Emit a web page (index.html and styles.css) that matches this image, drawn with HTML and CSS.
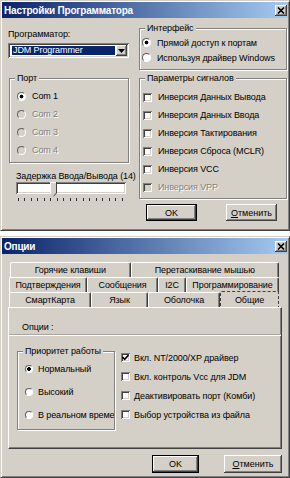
FILE: index.html
```html
<!DOCTYPE html>
<html lang="ru">
<head>
    <meta charset="UTF-8">
    <title>Настройки Программатора</title>
    <link rel="stylesheet" href="styles.css">
</head>
<body>
    <!-- Programmer settings dialog -->
    <div class="dlg dlg-prog">
        <div class="titlebar">
            <span>Настройки Программатора</span>
            <span class="close"><svg width="8" height="7" viewBox="0 0 8 7"><path d="M1 0.5 L7 6.5 M7 0.5 L1 6.5" stroke="#000" stroke-width="1.6"/></svg></span>
        </div>
        <div class="prog-body">
            <div class="col-left">
                <div class="label">Программатор:</div>
                <div class="combo">
                    <span class="combo-sel">JDM Programmer</span>
                    <span class="combo-btn"><svg width="7" height="4" viewBox="0 0 7 4"><path d="M0 0 H7 L3.5 4 Z" fill="#000"/></svg></span>
                </div>
                <fieldset class="group group-port">
                    <legend>Порт</legend>
                    <div class="group-in">
                        <div class="radio on"><i></i>Com 1</div>
                        <div class="radio off"><i></i>Com 2</div>
                        <div class="radio off"><i></i>Com 3</div>
                        <div class="radio off"><i></i>Com 4</div>
                    </div>
                </fieldset>
                <div class="label delay">Задержка Ввода/Вывода (14)</div>
                <div class="slider">
                    <div class="track"></div>
                    <svg class="thumb" width="7" height="15" viewBox="0 0 7 15">
                        <path d="M0 0 H7 V11 L3.5 15 L0 11 Z" fill="#d4d0c8"/>
                        <path d="M6.5 0 V11 L3.5 14.3" stroke="#404040" fill="none"/>
                        <path d="M0.5 11 V0.5 H6" stroke="#fff" fill="none"/>
                    </svg>
                </div>
                <div class="ticks"></div>
            </div>
            <div class="col-right">
                <fieldset class="group group-iface">
                    <legend>Интерфейс</legend>
                    <div class="group-in">
                        <div class="radio on"><i></i>Прямой доступ к портам</div>
                        <div class="radio"><i></i>Используя драйвер Windows</div>
                    </div>
                </fieldset>
                <fieldset class="group group-sig">
                    <legend>Параметры сигналов</legend>
                    <div class="group-in">
                        <div class="check"><i></i>Инверсия Данных Вывода</div>
                        <div class="check"><i></i>Инверсия Данных Ввода</div>
                        <div class="check"><i></i>Инверсия Тактирования</div>
                        <div class="check"><i></i>Инверсия Сброса (MCLR)</div>
                        <div class="check"><i></i>Инверсия VCC</div>
                        <div class="check off"><i></i>Инверсия VPP</div>
                    </div>
                </fieldset>
                <div class="buttons buttons-prog">
                    <button class="btn default">OK</button>
                    <button class="btn"><u>О</u>тменить</button>
                </div>
            </div>
        </div>
    </div>

    <!-- Options dialog -->
    <div class="dlg dlg-opt">
        <div class="titlebar">
            <span>Опции</span>
            <span class="close"><svg width="8" height="7" viewBox="0 0 8 7"><path d="M1 0.5 L7 6.5 M7 0.5 L1 6.5" stroke="#000" stroke-width="1.6"/></svg></span>
        </div>
        <div class="tabs">
            <div class="tab-row row1">
                <span class="tab" style="width:121px">Горячие клавиши</span>
                <span class="tab" style="width:149px">Перетаскивание мышью</span>
            </div>
            <div class="tab-row">
                <span class="tab" style="width:78px">Подтверждения</span>
                <span class="tab" style="width:71px">Сообщения</span>
                <span class="tab" style="width:28px">I2C</span>
                <span class="tab" style="width:93px">Программирование</span>
            </div>
            <div class="tab-row">
                <span class="tab" style="width:82px">СмартКарта</span>
                <span class="tab" style="width:57px">Язык</span>
                <span class="tab" style="width:72px">Оболочка</span>
                <span class="tab sel" style="width:59px">Общие</span>
            </div>
        </div>
        <div class="panel">
            <div class="panel-title">Опции :</div>
            <div class="separator"></div>
            <div class="panel-row">
                <fieldset class="group group-prio">
                    <legend>Приоритет работы</legend>
                    <div class="group-in">
                        <div class="radio on"><i></i>Нормальный</div>
                        <div class="radio"><i></i>Высокий</div>
                        <div class="radio"><i></i>В реальном времени</div>
                    </div>
                </fieldset>
                <div class="opt-checks">
                    <div class="check on"><i><svg width="7" height="7" viewBox="0 0 7 7"><path d="M0.5 3 L2.7 5.3 L6.5 1" stroke="#000" stroke-width="1.6" fill="none"/></svg></i>Вкл. NT/2000/XP драйвер</div>
                    <div class="check"><i></i>Вкл. контроль Vcc для JDM</div>
                    <div class="check"><i></i>Деактивировать порт (Комби)</div>
                    <div class="check"><i></i>Выбор устройства из файла</div>
                </div>
            </div>
        </div>
        <div class="buttons buttons-opt">
            <button class="btn default btn-ok">OK</button>
            <button class="btn btn-cancel"><u>О</u>тменить</button>
        </div>
    </div>
</body>
</html>
```

FILE: styles.css
```css
/* General */
* { box-sizing: border-box; }
body { margin: 0; background: #fff; font-family: "Liberation Sans", Arial, sans-serif; font-size: 9px; letter-spacing: -0.1px; color: #000; }

/* Window frame */
.dlg { width: 290px; background: #d4d0c8; border: 1px solid; border-color: #d4d0c8 #404040 #404040 #d4d0c8; box-shadow: inset 1px 1px #fff, inset -1px -1px #808080; padding: 1px; }
.dlg-prog { height: 231px; }
.dlg-opt { height: 242px; margin-top: 5px; }

.titlebar { height: 16px; display: flex; align-items: center; justify-content: space-between; padding: 0 1px 0 2px; background: linear-gradient(90deg, #0a246a, #a6caf0); color: #fff; font-weight: bold; font-size: 10px; letter-spacing: -0.2px; }
.close { width: 12px; height: 11px; display: flex; align-items: center; justify-content: center; background: #d4d0c8; box-shadow: inset -1px -1px #404040, inset 1px 1px #fff, inset -2px -2px #808080; }

/* Common controls */
.label { line-height: 12px; white-space: nowrap; }
.group { margin: 0; padding: 0; min-width: 0; border: 1px solid #808080; box-shadow: 1px 1px 0 #fff, inset 1px 1px 0 #fff; }
.group legend { padding: 0 2px; margin-left: 5px; line-height: 12px; background: #d4d0c8; white-space: nowrap; }
.radio, .check { display: flex; align-items: center; white-space: nowrap; }
.radio i { width: 9px; height: 9px; flex: none; margin-right: 6px; border-radius: 50%; border: 1px solid; border-color: #606060 #fff #fff #606060; background: #fff; }
.radio.on i { background: radial-gradient(circle, #000 0 1.6px, #fff 2.2px); }
.radio.off, .check.off { color: #808080; text-shadow: 1px 1px 0 #fff; }
.radio.off i, .check.off i { background: #d4d0c8; }
.check i { width: 9px; height: 9px; flex: none; margin-right: 6px; display: flex; align-items: center; justify-content: center; background: #fff; box-shadow: inset 1px 1px #808080, inset -1px -1px #fff, inset 2px 2px #404040, inset -2px -2px #d4d0c8; }

.btn { height: 17px; width: 51px; padding: 0; border: none; font: inherit; color: #000; background: #d4d0c8; box-shadow: inset -1px -1px #404040, inset 1px 1px #fff, inset -2px -2px #808080, inset 2px 2px #d4d0c8; }
.btn.default { border: 1px solid #000; }
.btn u { text-decoration: underline; }

/* Programmer dialog */
.prog-body { display: flex; gap: 6px; padding-left: 6px; }
.col-left { width: 125px; }
.col-left > .label:first-child { margin-top: 10px; }
.combo { margin-top: 3px; width: 121px; height: 15px; display: flex; align-items: center; padding: 2px; background: #fff; box-shadow: inset 1px 1px #808080, inset -1px -1px #fff, inset 2px 2px #404040, inset -2px -2px #d4d0c8; }
.combo-sel { flex: 1; height: 9px; margin: 0 1px 0 2px; padding-left: 1px; line-height: 9px; background: #0a246a; color: #fff; }
.combo-btn { width: 11px; height: 11px; display: flex; align-items: center; justify-content: center; background: #d4d0c8; box-shadow: inset -1px -1px #404040, inset 1px 1px #fff, inset -2px -2px #808080; }

.group-port { margin: 14px 0 0 1px; width: 120px; }
.group-port .group-in { padding: 3px 0 3px 7px; }
.group-port .radio { height: 18px; }

.delay { margin-top: 7px; padding-left: 8px; }
.slider { position: relative; margin-left: 8px; width: 110px; height: 15px; }
.track { width: 110px; height: 12px; background: #fff; box-shadow: inset 1px 1px #808080, inset -1px -1px #fff, inset 2px 2px #404040, inset -2px -2px #d4d0c8; }
.thumb { position: absolute; left: 34px; top: 0; }
.ticks { margin: 1px 0 0 10px; width: 106px; height: 3px; background: repeating-linear-gradient(90deg, #303030 0 1px, transparent 1px 6.5px); }

.col-right { width: 148px; }
.group-iface { margin-top: 4px; }
.group-iface .group-in { padding: 1px 0 4px 2px; }
.group-iface .radio { height: 15px; }
.group-sig { margin-top: 2px; }
.group-sig .group-in { padding: 4px 0 2px 3px; }
.group-sig .check { height: 18px; }

.buttons { display: flex; }
.buttons-prog { margin-top: 5px; padding-left: 7px; gap: 29px; }

/* Options dialog */
.tabs { margin: 8px 0 0 7px; width: 270px; }
.tab-row { display: flex; height: 15px; }
.row1 { margin-left: 1px; }
.tab { height: 15px; display: flex; align-items: center; justify-content: center; white-space: nowrap; border-top: 1px solid #fff; border-left: 1px solid #fff; border-right: 1px solid #404040; border-radius: 2px 2px 0 0; box-shadow: inset -1px 0 #808080; }
.tab.sel { position: relative; z-index: 1; height: 16px; margin: -1px 0 -1px; background: #d4d0c8; border: 1px dashed #404040; border-bottom: none; box-shadow: none; }

.panel { width: 274px; height: 142px; margin-left: 6px; border: 1px solid; border-color: #fff #404040 #404040 #fff; box-shadow: inset -1px -1px #808080; }
.panel-title { margin-top: 13px; padding-left: 13px; line-height: 12px; }
.separator { margin-top: 1px; height: 2px; border-top: 1px solid #a8a5a0; border-bottom: 1px solid #fff; }
.panel-row { display: flex; margin-top: 9px; padding-left: 8px; gap: 6px; }
.group-prio { width: 98px; }
.group-prio .group-in { padding: 0 1px 3px 7px; overflow: hidden; }
.group-prio .radio { height: 23px; }
.group-prio .radio i { width: 8px; height: 8px; margin-right: 5px; }
.opt-checks { margin-top: 3px; }
.opt-checks .check { height: 19px; }
.opt-checks .check i { margin-right: 4px; }

.buttons-opt { margin-top: 6px; justify-content: flex-end; padding-right: 6px; gap: 25px; }
.btn-ok { width: 47px; height: 18px; }
.btn-cancel { width: 58px; height: 18px; }
```
